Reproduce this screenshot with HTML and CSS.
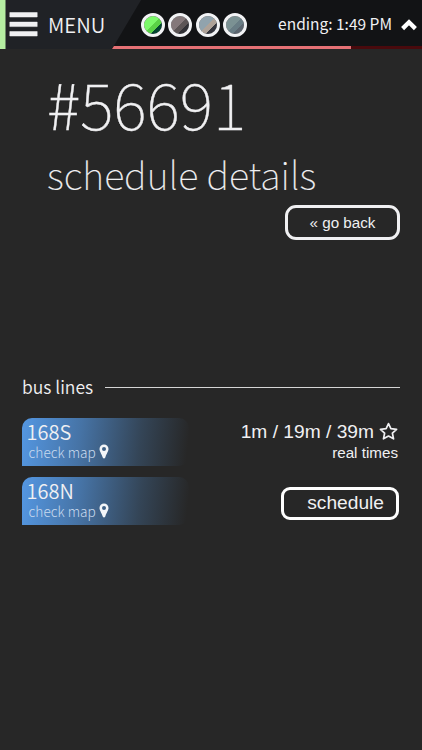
FILE: index.html
```
<!DOCTYPE html>
<html lang="en">
<head>
<meta charset="utf-8">
<title>Schedule details</title>
<link rel="stylesheet" href="styles.css">
</head>
<body>
<header class="topbar">
  <div class="menu">
    <svg class="burger" viewBox="0 0 30 26"><path d="M.8.500h27.400v4.500H.8zM.8 10.100h27.400v4.500H.8zM.8 19.500h27.400v4.500H.8z"/></svg>
    <span class="menu-label">MENU</span>
  </div>
  <div class="dots">
    <i class="dot green"></i><i class="dot brown"></i><i class="dot sand"></i><i class="dot slate"></i>
  </div>
  <span class="ending">ending: 1:49 PM</span>
  <svg class="chevron" viewBox="0 0 16 12"><path d="M1.600 9.600L8 3.300l6.400 6.300"/></svg>
  <div class="progress"><div class="progress-value"></div></div>
</header>
<main>
  <section class="hero">
    <h1>#56691</h1>
    <h2>schedule details</h2>
    <button class="back">« go back</button>
  </section>
  <section class="lines">
    <h3><span>bus lines</span></h3>
    <div class="row">
      <div class="line"><b>168S</b><small>check map <svg class="pin" viewBox="0 0 10 15"><path fill-rule="evenodd" d="M5 .5A4.500 4.500 0 0 0 .5 5C.5 7.200 2.100 9 3.700 13.400Q5 15.400 6.300 13.400C7.900 9 9.500 7.200 9.500 5A4.500 4.500 0 0 0 5 .5ZM5 2.900a2 2 0 1 1 0 4a2 2 0 0 1 0-4Z"/></svg></small></div>
      <div class="times">
        <div class="next"><span>1m / 19m / 39m</span><svg class="star" viewBox="0 0 20 20"><path d="M10 1.600l2.500 5.400 6 .7-4.400 4.100 1.200 5.900-5.300-2.900-5.300 2.900 1.200-5.900-4.400-4.100 6-.7z"/></svg></div>
        <div class="real">real times</div>
      </div>
    </div>
    <div class="row">
      <div class="line"><b>168N</b><small>check map <svg class="pin" viewBox="0 0 10 15"><path fill-rule="evenodd" d="M5 .5A4.500 4.500 0 0 0 .5 5C.5 7.200 2.100 9 3.700 13.400Q5 15.400 6.300 13.400C7.900 9 9.500 7.200 9.500 5A4.500 4.500 0 0 0 5 .5ZM5 2.900a2 2 0 1 1 0 4a2 2 0 0 1 0-4Z"/></svg></small></div>
      <button class="schedule">schedule</button>
    </div>
  </section>
</main>
</body>
</html>
```
FILE: styles.css
```
* { box-sizing: border-box; }
body {
  margin: 0;
  min-height: 750px;
  background: #272727;
  color: #f0f0f2;
  font-family: "Noto Sans CJK JP", "Noto Sans", sans-serif;
}
.topbar {
  position: relative;
  display: flex;
  align-items: center;
  height: 49px;
  background: #121315;
}
.menu {
  display: flex;
  align-items: center;
  width: 141px;
  height: 49px;
  padding-left: 9px;
  background: linear-gradient(90deg, #b5eea2 5px, #202226 6px);
  clip-path: polygon(0 0, 100% 0, 112px 100%, 0 100%);
}
.burger { width: 30px; height: 26px; margin-top: 1px; }
.burger path { fill: #f0f0f2; stroke: #f0f0f2; stroke-width: .5px; stroke-linejoin: round; }
.menu-label { margin-left: 9px; margin-top: -2px; font-size: 20.300px; line-height: 28px; font-weight: 350; }
.dots { display: flex; gap: 3.400px; }
.dot {
  width: 24px;
  height: 24px;
  border: 3px solid #f2f3f5;
  border-radius: 50%;
  background: linear-gradient(135deg, var(--a) 48%, var(--b) 48% 68%, var(--c) 68%) padding-box;
}
.green { --a: #7cf96a; --b: #5bd247; --c: #04452f; }
.brown { --a: #84787a; --b: #5c5556; --c: #303035; }
.sand { --a: #91a3ad; --b: #aea298; --c: #34353d; }
.slate { --a: #7b9193; --b: #697d85; --c: #5c6670; }
.ending { margin-left: auto; margin-top: -3px; font-size: 15.500px; line-height: 24px; white-space: nowrap; }
.chevron { width: 16px; height: 12px; margin: 0 5px 0 9px; }
.chevron path { fill: none; stroke: #fff; stroke-width: 4.300px; }
.progress {
  position: absolute;
  left: 112px;
  right: 0;
  bottom: 0;
  height: 3px;
  background: #490a0d;
  clip-path: polygon(2px 0, 100% 0, 100% 100%, 0 100%);
}
.progress-value { width: 239px; height: 3px; background: #e57175; }
.hero { display: flex; flex-direction: column; height: 323px; padding: 15px 22px 0 47px; }
h1, h2, h3 { margin: 0; white-space: nowrap; }
h1 { font-size: 63.700px; line-height: 76px; font-weight: 100; -webkit-text-stroke: .4px #f0f0f2; }
h2 { margin-top: 9px; font-size: 37.900px; line-height: 50px; font-weight: 100; -webkit-text-stroke: .15px #f0f0f2; }
button {
  background: transparent;
  color: #f0f0f2;
  border: 3px solid #f0f0f2;
  font-family: "Liberation Sans", sans-serif;
}
.back { align-self: flex-end; width: 115px; height: 35px; margin-top: 6px; padding: 0 0 1px; border-radius: 11px; font-size: 15.200px; }
.lines { padding: 0 22px; }
h3 { display: flex; align-items: center; gap: 12px; height: 31px; font-size: 17.500px; line-height: 30px; font-weight: 350; }
h3 span { margin-top: -2px; }
h3::after { content: ""; flex: 1; height: 1px; background: #d5d5d5; }
.row { display: flex; justify-content: space-between; height: 48px; margin-top: 11px; }
h3 + .row { margin-top: 15px; }
.line {
  width: 167px;
  height: 48px;
  padding: 2px 0 0 4.500px;
  border-radius: 10px 10px 10px 0;
  background: linear-gradient(97deg, #5497e2 0%, #4673a5 35%, #344557 70%, #272727 98%);
}
.line b { display: block; font-size: 20px; line-height: 24px; font-weight: 350; }
.line small { display: flex; align-items: center; margin-left: 2px; font-size: 13.700px; line-height: 14px; font-weight: 300; color: #c9daee; }
.pin { width: 10px; height: 15px; margin-left: 3px; fill: #f3f5f8; }
.times { padding: 3px 2px 0 0; text-align: right; font-family: "Liberation Sans", sans-serif; }
.next { display: flex; align-items: center; font-size: 19.200px; line-height: 22px; }
.star { width: 19px; height: 19px; margin: -2px 0 0 5px; }
.star path { fill: none; stroke: #f0f0f2; stroke-width: 1.800px; stroke-linejoin: round; }
.real { margin-top: 1px; font-size: 15.200px; line-height: 17px; }
.schedule { width: 118px; height: 33px; margin: 10px 1px 0 0; padding: 0 12px 1px 0; border-radius: 9px; text-align: right; font-size: 19.200px; line-height: 24px; border-color: #fff; }
```
